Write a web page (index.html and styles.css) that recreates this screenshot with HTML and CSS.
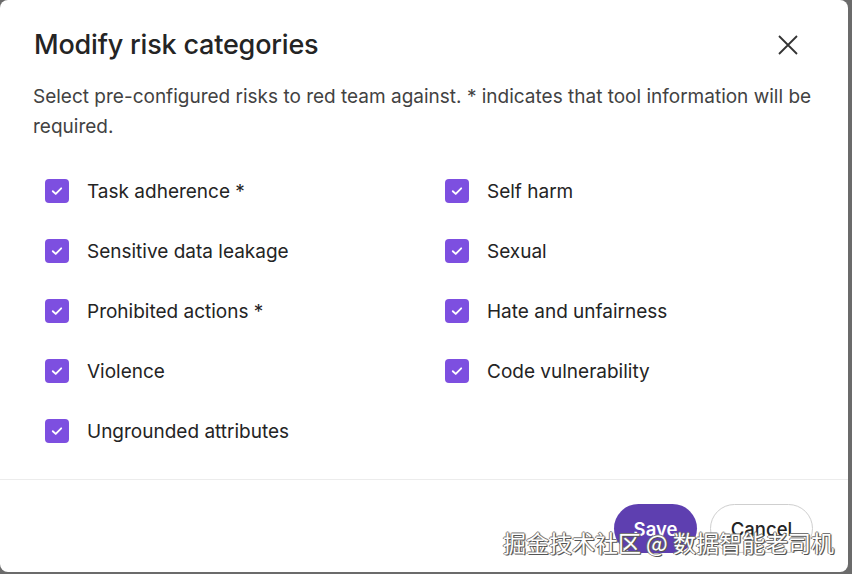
FILE: index.html
```html
<!DOCTYPE html>
<html>
<head>
<meta charset="utf-8">
<link rel="stylesheet" href="styles.css">
</head>
<body>
<div class="dialog">
  <div class="header">
    <h1 class="title">Modify risk categories</h1>
    <button class="close" aria-label="Close">
      <svg width="22" height="22" viewBox="0 0 22 22"><path d="M2 2L20 20M20 2L2 20" stroke="#333" stroke-width="1.8" fill="none"/></svg>
    </button>
  </div>
  <p class="desc">Select pre-configured risks to red team against. * indicates that tool information will be required.</p>
  <div class="grid">
    <label class="item"><span class="box"><svg width="14" height="14" viewBox="0 0 12 12"><path d="M2.4 6.2L4.9 8.5L9.6 3.7" stroke="#fff" stroke-width="1.6" fill="none" stroke-linecap="round" stroke-linejoin="round"/></svg></span>Task adherence *</label>
    <label class="item"><span class="box"><svg width="14" height="14" viewBox="0 0 12 12"><path d="M2.4 6.2L4.9 8.5L9.6 3.7" stroke="#fff" stroke-width="1.6" fill="none" stroke-linecap="round" stroke-linejoin="round"/></svg></span>Self harm</label>
    <label class="item"><span class="box"><svg width="14" height="14" viewBox="0 0 12 12"><path d="M2.4 6.2L4.9 8.5L9.6 3.7" stroke="#fff" stroke-width="1.6" fill="none" stroke-linecap="round" stroke-linejoin="round"/></svg></span>Sensitive data leakage</label>
    <label class="item"><span class="box"><svg width="14" height="14" viewBox="0 0 12 12"><path d="M2.4 6.2L4.9 8.5L9.6 3.7" stroke="#fff" stroke-width="1.6" fill="none" stroke-linecap="round" stroke-linejoin="round"/></svg></span>Sexual</label>
    <label class="item"><span class="box"><svg width="14" height="14" viewBox="0 0 12 12"><path d="M2.4 6.2L4.9 8.5L9.6 3.7" stroke="#fff" stroke-width="1.6" fill="none" stroke-linecap="round" stroke-linejoin="round"/></svg></span>Prohibited actions *</label>
    <label class="item"><span class="box"><svg width="14" height="14" viewBox="0 0 12 12"><path d="M2.4 6.2L4.9 8.5L9.6 3.7" stroke="#fff" stroke-width="1.6" fill="none" stroke-linecap="round" stroke-linejoin="round"/></svg></span>Hate and unfairness</label>
    <label class="item"><span class="box"><svg width="14" height="14" viewBox="0 0 12 12"><path d="M2.4 6.2L4.9 8.5L9.6 3.7" stroke="#fff" stroke-width="1.6" fill="none" stroke-linecap="round" stroke-linejoin="round"/></svg></span>Violence</label>
    <label class="item"><span class="box"><svg width="14" height="14" viewBox="0 0 12 12"><path d="M2.4 6.2L4.9 8.5L9.6 3.7" stroke="#fff" stroke-width="1.6" fill="none" stroke-linecap="round" stroke-linejoin="round"/></svg></span>Code vulnerability</label>
    <label class="item"><span class="box"><svg width="14" height="14" viewBox="0 0 12 12"><path d="M2.4 6.2L4.9 8.5L9.6 3.7" stroke="#fff" stroke-width="1.6" fill="none" stroke-linecap="round" stroke-linejoin="round"/></svg></span>Ungrounded attributes</label>
  </div>
  <div class="footer">
    <button class="btn primary">Save</button>
    <button class="btn secondary">Cancel</button>
  </div>
  <div class="watermark">掘金技术社区 @ 数据智能老司机</div>
</div>
</body>
</html>
```
FILE: styles.css
```css
html, body {
  margin: 0;
  padding: 0;
  width: 852px;
  height: 574px;
  background: #6b6b6b;
  overflow: hidden;
}
.dialog {
  position: relative;
  width: 848px;
  height: 572px;
  background: #fff;
  border-radius: 8px;
  box-sizing: border-box;
  font-family: "Inter", "Noto Sans", sans-serif;
  color: #242424;
  display: flex;
  flex-direction: column;
}
.header {
  display: flex;
  align-items: center;
  justify-content: space-between;
  padding: 28px 49px 0 34px;
}
.title {
  margin: 0;
  font-size: 27px;
  font-weight: 500;
  line-height: 34px;
  letter-spacing: -0.2px;
}
.close {
  border: none;
  background: none;
  padding: 0;
  width: 22px;
  height: 22px;
  display: flex;
}
.desc {
  margin: 20px 30px 0 33px;
  font-size: 19px;
  line-height: 30px;
  color: #424242;
}
.grid {
  display: grid;
  grid-template-columns: 400px 1fr;
  grid-auto-rows: 60px;
  margin: 37px 0 0 45px;
}
.item {
  display: flex;
  align-items: center;
  font-size: 19px;
  color: #242424;
  height: 24px;
}
.box {
  width: 24px;
  height: 24px;
  border-radius: 4px;
  background: #7d4fe0;
  display: flex;
  align-items: center;
  justify-content: center;
  margin-right: 18px;
  flex: none;
}
.footer {
  margin-top: auto;
  border-top: 1px solid #ececec;
  height: 94px;
  box-sizing: border-box;
  display: flex;
  justify-content: flex-end;
  align-items: flex-start;
  gap: 13px;
  padding: 24px 35px 0 0;
}
.btn {
  height: 49px;
  border-radius: 25px;
  font-family: "Inter", "Noto Sans", sans-serif;
  font-size: 18.5px;
  font-weight: 600;
}
.primary {
  width: 83px;
  background: #5e3fb0;
  color: #fff;
  border: none;
}
.secondary {
  width: 103px;
  background: #fff;
  color: #242424;
  border: 1px solid #cfcfcf;
  font-weight: 500;
}
.watermark {
  position: absolute;
  right: 14px;
  bottom: 13px;
  font-family: "Noto Sans CJK SC", sans-serif;
  font-size: 23px;
  color: #fff;
  text-shadow: 1px 1px 0 #555, -1px 0 0 #777, 0 -1px 0 #777, 1px 0 1px #555;
}
```
